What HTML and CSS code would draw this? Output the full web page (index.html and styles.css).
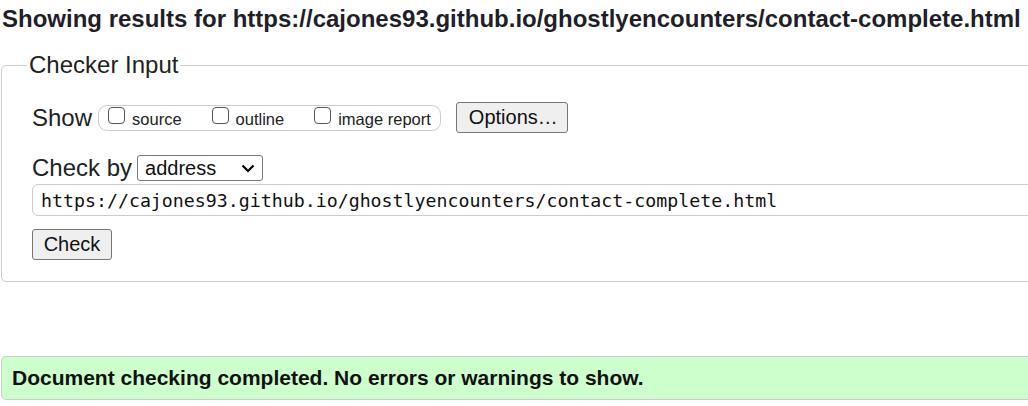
FILE: index.html
```html
<!DOCTYPE html>
<html>
<head>
<meta charset="utf-8">
<title>Nu Html Checker</title>
<link rel="stylesheet" href="styles.css">
</head>
<body>
<h2 class="results-title">Showing results for https://cajones93.github.io/ghostlyencounters/contact-complete.html</h2>
<fieldset class="checker">
  <legend class="checker-legend">Checker Input</legend>
  <div class="checker-body">
    <div class="row show-row">
      <span class="row-label">Show</span>
      <span class="show-group">
        <label class="opt"><input type="checkbox" class="cb"><span>source</span></label>
        <label class="opt"><input type="checkbox" class="cb"><span>outline</span></label>
        <label class="opt"><input type="checkbox" class="cb"><span>image report</span></label>
      </span>
      <button class="btn btn-options" type="button">Options…</button>
    </div>
    <div class="row checkby-row">
      <span class="row-label">Check by</span>
      <span class="select-wrap">
        <select class="select"><option>address</option></select>
        <svg class="chev" width="14" height="9" viewBox="0 0 14 9"><path d="M1.5 1.5 L7 7 L12.5 1.5" fill="none" stroke="#000" stroke-width="2.2"/></svg>
      </span>
    </div>
    <input class="url" type="text" value="https://cajones93.github.io/ghostlyencounters/contact-complete.html">
    <div class="row submit-row">
      <button class="btn btn-check" type="button">Check</button>
    </div>
  </div>
</fieldset>
<div class="success">Document checking completed. No errors or warnings to show.</div>
</body>
</html>
```
FILE: styles.css
```css
html { overflow: hidden; }
body {
  margin: 0;
  font-family: "Liberation Sans", Arial, sans-serif;
  color: #222;
  background: #fff;
}
.results-title {
  margin: 5px 0 0 0;
  padding-left: 2px;
  font-size: 24px;
  line-height: 28px;
  font-weight: bold;
  color: #1f1f2a;
  white-space: nowrap;
}
.checker {
  margin: 18px -60px 0 1px;
  padding: 0;
  border: 1px solid #ccc;
  border-radius: 5px;
}
.checker-legend {
  margin-left: 25px;
  padding: 0 2px;
  font-size: 24px;
  line-height: 28px;
  color: #222;
}
.checker-body {
  padding: 23px 0 21px 30px;
}
.row {
  display: flex;
  align-items: center;
}
.row-label {
  font-size: 24px;
  line-height: 26px;
  color: #222;
}
.show-row { height: 31px; }
.show-group {
  display: flex;
  align-items: center;
  height: 24px;
  margin-left: 6px;
  padding: 0 9px 0 9px;
  border: 1px solid #ccc;
  border-radius: 9px;
  gap: 30px;
}
.opt {
  display: flex;
  align-items: center;
  gap: 7px;
  font-size: 16.5px;
  color: #222;
}
.opt span { position: relative; top: 2px; }
.cb {
  appearance: none;
  -webkit-appearance: none;
  margin: 0;
  width: 17px;
  height: 17px;
  border: 1px solid #555;
  border-radius: 4px;
  background: #fff;
  position: relative;
  top: -2px;
}
.btn {
  font-family: "Liberation Sans", Arial, sans-serif;
  font-size: 20px;
  color: #111;
  background: #efefef;
  border: 1px solid #767676;
  border-radius: 3px;
  height: 31px;
  padding: 0 12px;
}
.btn-options { margin-left: 15px; width: 112px; }
.checkby-row { margin-top: 22px; height: 26px; }
.select-wrap {
  position: relative;
  margin-left: 5px;
  display: inline-block;
}
.select {
  appearance: none;
  -webkit-appearance: none;
  display: block;
  width: 126px;
  height: 26px;
  margin: 0;
  padding: 0 0 0 7px;
  font-family: "Liberation Sans", Arial, sans-serif;
  font-size: 20px;
  color: #111;
  background: #fff;
  border: 1px solid #767676;
  border-radius: 3px;
}
.chev {
  position: absolute;
  right: 8px;
  top: 9px;
  pointer-events: none;
}
.url {
  display: block;
  box-sizing: border-box;
  width: 1100px;
  height: 32px;
  margin: 3px 0 0 0;
  padding: 0 8px;
  font-family: "DejaVu Sans Mono", "Liberation Mono", monospace;
  font-size: 18.25px;
  color: #111;
  border: 1px solid #ccc;
  border-radius: 6px;
  background: #fff;
}
.submit-row { margin-top: 13px; }
.btn-check { width: 80px; padding: 0; }
.success {
  margin: 74px -60px 0 1px;
  height: 44px;
  box-sizing: border-box;
  padding: 0 10px;
  display: flex;
  align-items: center;
  background: #ccffcc;
  border: 1px solid #ccc;
  border-radius: 5px;
  font-size: 21px;
  font-weight: bold;
  color: #111;
}
```
